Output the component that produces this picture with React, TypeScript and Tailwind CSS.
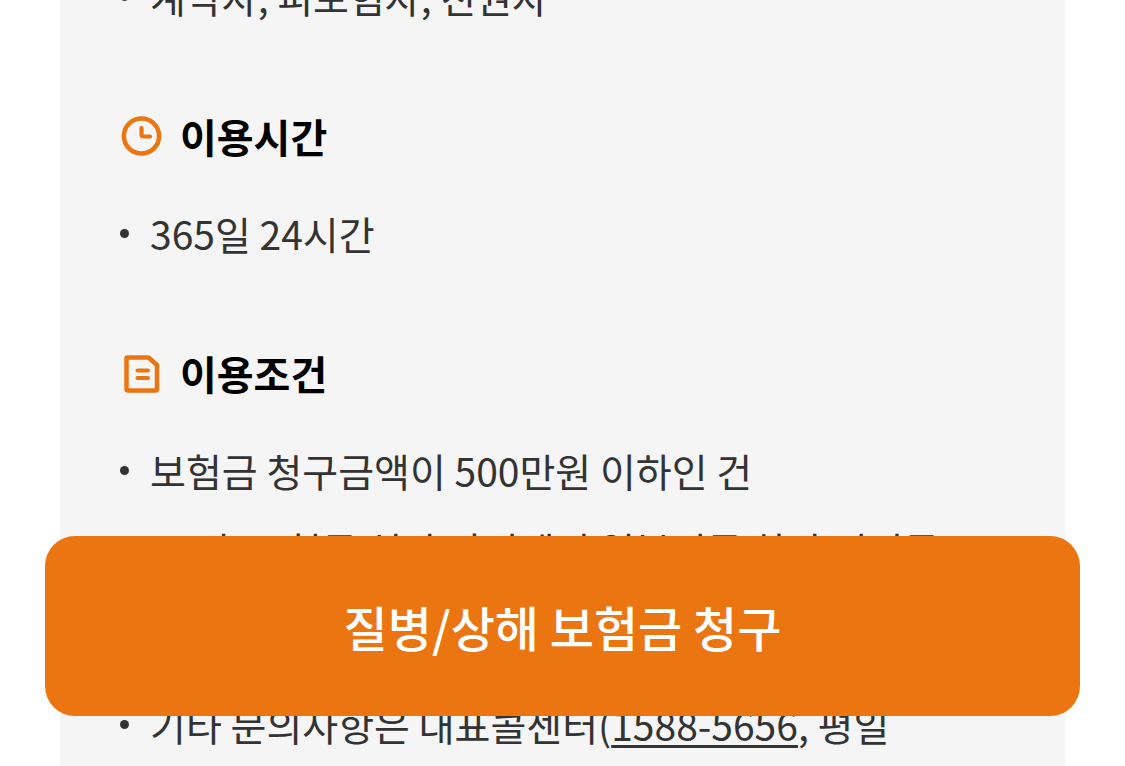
import type { ReactNode } from "react";

function ClockIcon() {
    return (
        <svg className="w-[42px] h-[42px] shrink-0" viewBox="0 0 42 42" fill="none" stroke="#eb7510" strokeWidth="4.500" strokeLinecap="round" strokeLinejoin="round" aria-hidden="true">
            <circle cx="21.5" cy="21" r="17.6" />
            <path d="M21.5 13V19.500Q21.500 21.500 23.500 21.500H30" strokeWidth="4.200" />
        </svg>
    );
}

function DocumentIcon() {
    return (
        <svg className="w-[42px] h-[42px] shrink-0" viewBox="0 0 42 42" fill="none" stroke="#eb7510" strokeWidth="4.500" strokeLinecap="round" strokeLinejoin="round" aria-hidden="true">
            <path d="M7.500 5.500H28.500L37 13V37Q37 38.500 35.500 38.500H8Q6.500 38.500 6.500 37V6.500Q6.500 5.500 7.500 5.500Z" />
            <path d="M17.500 18.500H28M17.500 26H28" strokeWidth="4" />
        </svg>
    );
}

function Title({ icon, children }: { icon: ReactNode; children: ReactNode }) {
    return (
        <h2 className="flex items-center gap-[18px] text-[40px] font-bold text-black">
            {icon}
            <span>{children}</span>
        </h2>
    );
}

function Item({ children, className = "" }: { children: ReactNode; className?: string }) {
    return (
        <li className={`flex gap-5 ${className}`}>
            {/* Bullet */}
            <span className="flex h-12 w-[10px] shrink-0 items-center">
                <span className="h-[9px] w-[9px] rounded-full bg-[#333]" />
            </span>
            <p>{children}</p>
        </li>
    );
}

export default function App() {
    return (
        <div className="relative h-screen overflow-hidden bg-white font-['Noto_Sans_CJK_KR',sans-serif]">
            <main className="mx-[60px] -mt-7 min-h-full bg-[#f5f5f5] px-[60px] pb-[60px] text-[39px] leading-[48px] text-[#333]">
                <div className="flex flex-col gap-[92px]">
                    <ul>
                        <Item>계약자, 피보험자, 친권자</Item>
                    </ul>
                    <section className="flex flex-col gap-[49px]">
                        <Title icon={<ClockIcon />}>이용시간</Title>
                        <ul>
                            <Item>365일 24시간</Item>
                        </ul>
                    </section>
                    <section className="flex flex-col gap-[49px]">
                        <Title icon={<DocumentIcon />}>이용조건</Title>
                        <ul className="flex flex-col gap-[31px]">
                            <Item>보험금 청구금액이 500만원 이하인 건</Item>
                            <Item className="min-h-36">그 외, 보험금 심사 과정에서 일부지급 하나 미지급</Item>
                            <Item>
                                기타 문의사항은 대표콜센터(<a href="tel:1588-5656" className="underline decoration-[3px] underline-offset-[4px]">1588-5656</a>, 평일
                            </Item>
                        </ul>
                    </section>
                </div>
            </main>

            {/* Fixed claim button */}
            <div className="fixed inset-x-[45px] bottom-[50px]">
                <button type="button" className="h-[180px] w-full rounded-[30px] bg-[#eb7510] text-[48px] font-medium text-white">
                    질병/상해 보험금 청구
                </button>
            </div>
        </div>
    );
}
